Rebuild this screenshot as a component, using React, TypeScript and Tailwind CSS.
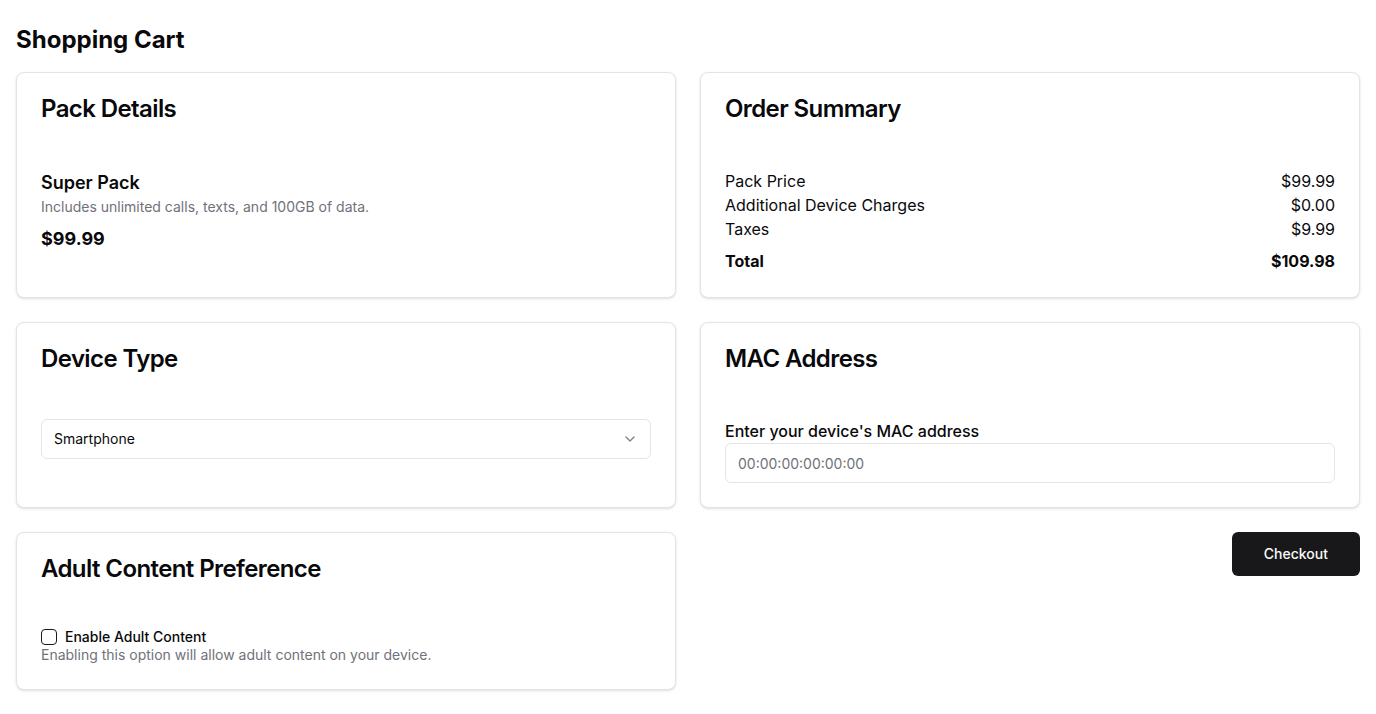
import React from "react";
import { ChevronDown } from "lucide-react";

function Card({ title, children }: { title: string; children: React.ReactNode }) {
  return (
    <div className="rounded-lg border border-[#e4e4e7] bg-white text-[#09090b] shadow-sm">
      <div className="flex flex-col p-6">
        <h3 className="text-2xl font-semibold leading-none tracking-tight">{title}</h3>
      </div>
      <div className="p-6 pt-6">{children}</div>
    </div>
  );
}

export default function App() {
  const [checked, setChecked] = React.useState(false);
  return (
    <div
      className="min-h-screen bg-white px-4 pt-6 pb-6 text-[#09090b]"
      style={{ fontFamily: "Inter, 'Noto Sans', sans-serif" }}
    >
      <h1 className="mb-4 text-2xl font-bold leading-8">Shopping Cart</h1>
      <div className="grid grid-cols-2 gap-6">
        <Card title="Pack Details">
          <div className="text-lg font-semibold leading-7">Super Pack</div>
          <p className="text-sm leading-5 text-[#71717a]">
            Includes unlimited calls, texts, and 100GB of data.
          </p>
          <p className="mt-2 text-lg font-bold leading-7">$99.99</p>
        </Card>
        <Card title="Order Summary">
          <div className="flex justify-between text-base leading-6">
            <span>Pack Price</span>
            <span>$99.99</span>
          </div>
          <div className="flex justify-between text-base leading-6">
            <span>Additional Device Charges</span>
            <span>$0.00</span>
          </div>
          <div className="flex justify-between text-base leading-6">
            <span>Taxes</span>
            <span>$9.99</span>
          </div>
          <div className="mt-2 flex justify-between text-base font-bold leading-6">
            <span>Total</span>
            <span>$109.98</span>
          </div>
        </Card>
        <Card title="Device Type">
          <button
            type="button"
            className="flex h-10 w-full items-center justify-between rounded-md border border-[#e4e4e7] bg-white px-3 py-2 text-sm"
          >
            <span>Smartphone</span>
            <ChevronDown className="h-4 w-4 opacity-50" />
          </button>
        </Card>
        <Card title="MAC Address">
          <label className="block text-base font-medium leading-6">
            Enter your device's MAC address
          </label>
          <input
            placeholder="00:00:00:00:00:00"
            className="flex h-10 w-full rounded-md border border-[#e4e4e7] bg-white px-3 py-2 text-sm placeholder:text-[#71717a] outline-none"
          />
        </Card>
        <Card title="Adult Content Preference">
          <div className="flex items-center gap-2">
            <button
              type="button"
              onClick={() => setChecked(!checked)}
              className="h-4 w-4 shrink-0 rounded-[4px] border border-[#18181b] bg-white"
            />
            <label className="text-sm font-medium leading-none">Enable Adult Content</label>
          </div>
          <p className="text-sm leading-5 text-[#71717a]">
            Enabling this option will allow adult content on your device.
          </p>
        </Card>
        <div className="flex items-start justify-end">
          <button
            type="button"
            className="inline-flex h-11 items-center justify-center rounded-md bg-[#18181b] px-8 text-sm font-medium text-[#fafafa]"
          >
            Checkout
          </button>
        </div>
      </div>
    </div>
  );
}
